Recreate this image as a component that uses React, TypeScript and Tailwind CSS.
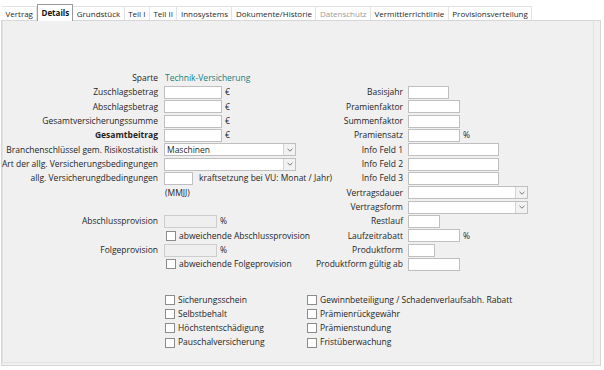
import React from "react";

const tabs = [
  "Vertrag",
  "Details",
  "Grundstück",
  "Teil I",
  "Teil II",
  "Innosystems",
  "Dokumente/Historie",
  "Datenschutz",
  "Vermittlerrichtlinie",
  "Provisionsverteilung",
];

const Label = ({ children, bold }: { children?: React.ReactNode; bold?: boolean }) => (
  <div
    className={`flex justify-end whitespace-nowrap pr-[6px] text-[#1f1f1f] ${bold ? "font-bold" : ""}`}
  >
    {children}
  </div>
);

const RLabel = ({ children }: { children?: React.ReactNode }) => (
  <div className="flex justify-end whitespace-nowrap pr-[5px] text-[#1f1f1f]">{children}</div>
);

const Box = ({ w, disabled }: { w: string; disabled?: boolean }) => (
  <div
    className={`h-[13px] shrink-0 border ${
      disabled ? "border-[#cdcdcd] bg-[#efefef]" : "border-[#bfbfbf] bg-white"
    } ${w}`}
  />
);

const Combo = ({ w, value }: { w: string; value?: string }) => (
  <div className={`flex h-[13px] shrink-0 items-center border border-[#bfbfbf] bg-white ${w}`}>
    <span className="flex-1 pl-[2px] leading-none text-[#1f1f1f]">{value}</span>
    <div className="flex h-[11px] w-[12px] items-center justify-center border-l border-[#d4d4d4] bg-[#f2f2f2]">
      <svg width="6" height="4" viewBox="0 0 6 4">
        <path d="M0.5 0.8 L3 3.2 L5.5 0.8" fill="none" stroke="#6b6b6b" strokeWidth="0.9" />
      </svg>
    </div>
  </div>
);

const Check = ({ label }: { label: string }) => (
  <div className="flex items-center whitespace-nowrap">
    <div className="mr-[3px] h-[10px] w-[10px] shrink-0 border border-[#8c8c8c] bg-white" />
    <span className="text-[#1f1f1f]">{label}</span>
  </div>
);

const Field = ({ children }: { children?: React.ReactNode }) => (
  <div className="flex items-center whitespace-nowrap">{children}</div>
);

const Unit = ({ children }: { children: React.ReactNode }) => (
  <span className="ml-[3px] text-[#1f1f1f]">{children}</span>
);

export default function App() {
  return (
    <div
      className="h-[370px] w-[604px] overflow-hidden bg-white text-[8.5px] leading-none"
      style={{ fontFamily: '"Open Sans", "Noto Sans", sans-serif' }}
    >
      {/* tab strip */}
      <div className="flex h-[20px] items-end pl-[2px] text-[8px]">
        {tabs.map((t) => {
          const active = t === "Details";
          const disabled = t === "Datenschutz";
          return active ? (
            <div
              key={t}
              className="relative z-10 -mb-px flex h-[17px] items-center border border-b-0 border-[#9a9a9a] bg-white px-[3px] font-bold text-[#111]"
            >
              {t}
            </div>
          ) : (
            <div
              key={t}
              className={`flex h-[14px] items-center border-t border-r border-[#e3e3e3] bg-white px-[3.5px] ${
                disabled ? "text-[#9a9a9a]" : "text-[#1f1f1f]"
              }`}
            >
              {t}
            </div>
          );
        })}
      </div>

      {/* panel */}
      <div className="ml-[1px] h-[346px] w-[600px] border border-[#d6d6d6] bg-[#f0f0f0]">
        <div className="mr-[6px] h-[342px] border-r border-b border-l border-[#e2e2e2] pl-[5px] pt-[50px]">
          <div className="grid grid-cols-[156px_138px_106px_1fr] auto-rows-[14.33px] items-center">
            {/* row 0 */}
            <Label>Sparte</Label>
            <Field>
              <span className="pl-[1px] text-[#17807f]">Technik-Versicherung</span>
            </Field>
            <div />
            <div />

            {/* row 1 */}
            <Label>Zuschlagsbetrag</Label>
            <Field>
              <Box w="w-[58px]" />
              <Unit>€</Unit>
            </Field>
            <RLabel>Basisjahr</RLabel>
            <Field>
              <Box w="w-[41px]" />
            </Field>

            {/* row 2 */}
            <Label>Abschlagsbetrag</Label>
            <Field>
              <Box w="w-[58px]" />
              <Unit>€</Unit>
            </Field>
            <RLabel>Pramienfaktor</RLabel>
            <Field>
              <Box w="w-[52px]" />
            </Field>

            {/* row 3 */}
            <Label>Gesamtversicherungssumme</Label>
            <Field>
              <Box w="w-[58px]" />
              <Unit>€</Unit>
            </Field>
            <RLabel>Summenfaktor</RLabel>
            <Field>
              <Box w="w-[52px]" />
            </Field>

            {/* row 4 */}
            <Label bold>Gesamtbeitrag</Label>
            <Field>
              <Box w="w-[58px]" />
              <Unit>€</Unit>
            </Field>
            <RLabel>Pramiensatz</RLabel>
            <Field>
              <Box w="w-[52px]" />
              <Unit>%</Unit>
            </Field>

            {/* row 5 */}
            <Label>Branchenschlüssel gem. Risikostatistik</Label>
            <Field>
              <Combo w="w-[132px]" value="Maschinen" />
            </Field>
            <RLabel>Info Feld 1</RLabel>
            <Field>
              <Box w="w-[91px]" />
            </Field>

            {/* row 6 */}
            <Label>Art der allg. Versicherungsbedingungen</Label>
            <Field>
              <Combo w="w-[132px]" />
            </Field>
            <RLabel>Info Feld 2</RLabel>
            <Field>
              <Box w="w-[91px]" />
            </Field>

            {/* row 7 */}
            <Label>allg. Versicherungdbedingungen</Label>
            <Field>
              <Box w="w-[29px]" />
              <span className="ml-[6px] text-[#1f1f1f]">kraftsetzung bei VU: Monat / Jahr)</span>
            </Field>
            <RLabel>Info Feld 3</RLabel>
            <Field>
              <Box w="w-[91px]" />
            </Field>

            {/* row 8 */}
            <div />
            <Field>
              <span className="pl-[1px] text-[#1f1f1f]">(MMJJ)</span>
            </Field>
            <RLabel>Vertragsdauer</RLabel>
            <Field>
              <Combo w="w-[120px]" />
            </Field>

            {/* row 9 */}
            <div />
            <div />
            <RLabel>Vertragsform</RLabel>
            <Field>
              <Combo w="w-[120px]" />
            </Field>

            {/* row 10 */}
            <Label>Abschlussprovision</Label>
            <Field>
              <Box w="w-[53px]" disabled />
              <Unit>%</Unit>
            </Field>
            <RLabel>Restlauf</RLabel>
            <Field>
              <Box w="w-[32px]" />
            </Field>

            {/* row 11 */}
            <div />
            <div className="pl-[2px]">
              <Check label="abweichende Abschlussprovision" />
            </div>
            <RLabel>Laufzeitrabatt</RLabel>
            <Field>
              <Box w="w-[52px]" />
              <Unit>%</Unit>
            </Field>

            {/* row 12 */}
            <Label>Folgeprovision</Label>
            <Field>
              <Box w="w-[53px]" disabled />
              <Unit>%</Unit>
            </Field>
            <RLabel>Produktform</RLabel>
            <Field>
              <Box w="w-[27px]" />
            </Field>

            {/* row 13 */}
            <div />
            <div className="pl-[2px]">
              <Check label="abweichende Folgeprovision" />
            </div>
            <RLabel>Produktform gültig ab</RLabel>
            <Field>
              <Box w="w-[52px]" />
            </Field>
          </div>

          {/* options */}
          <div className="mt-[21px] flex pl-[157px]">
            <div className="grid w-[142px] auto-rows-[14.33px] items-center">
              <Check label="Sicherungsschein" />
              <Check label="Selbstbehalt" />
              <Check label="Höchstentschädigung" />
              <Check label="Pauschalversicherung" />
            </div>
            <div className="grid auto-rows-[14.33px] items-center">
              <Check label="Gewinnbeteiligung / Schadenverlaufsabh. Rabatt" />
              <Check label="Prämienrückgewähr" />
              <Check label="Prämienstundung" />
              <Check label="Fristüberwachung" />
            </div>
          </div>
        </div>
      </div>
    </div>
  );
}
